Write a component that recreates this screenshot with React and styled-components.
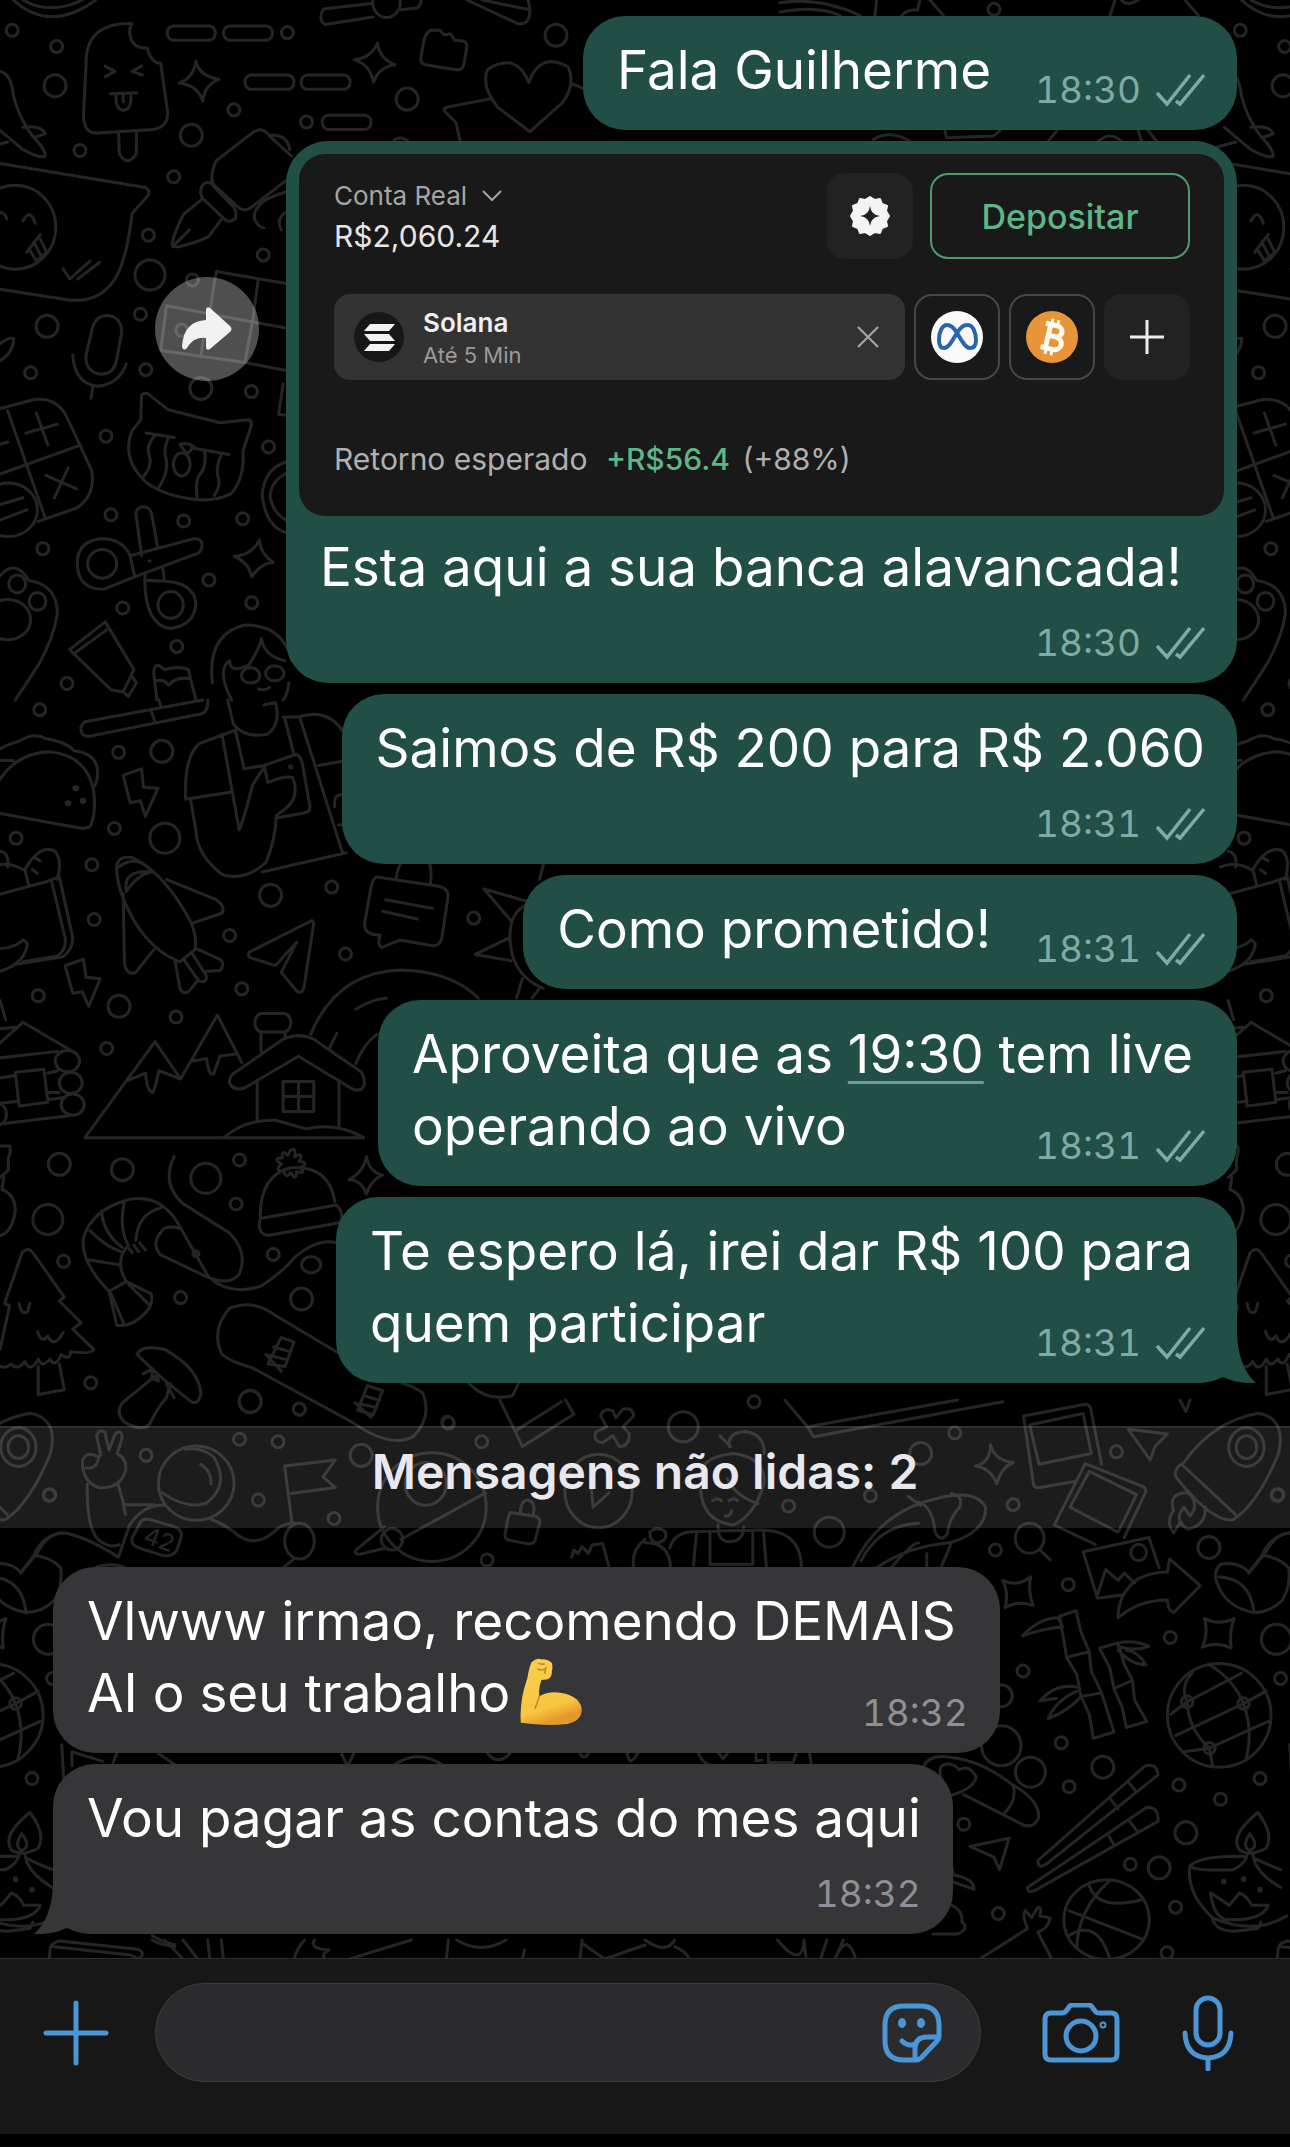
import styled, { createGlobalStyle, css } from 'styled-components';

const colors = {
  out: '#214f46',
  outMeta: '#80aaa5',
  incoming: '#363638',
  inMeta: '#8f8f96',
  accent: '#4a95d6',
  green: '#5fb586',
  card: '#191919',
};

// 배경 낙서 (wallpaper doodles), grouped in sheets that each have their own grid
const sheets = [
  {
    x: 0,
    y: 0,
    sx: 0.38265,
    sy: 0.44643,
    small: [[32, 68], [148, 104], [209, 337], [454, 396], [388, 527], [611, 246], [801, 273], [751, 73], [688, 571], [367, 704], [381, 828], [80, 835], [277, 977], [657, 877], [702, 1001], [634, 1162], [480, 1167], [290, 1153], [112, 1229], [546, 1299], [321, 1362], [658, 1350], [462, 1448], [175, 1531], [503, 627], [475, 740]],
    medium: [[144, 192], [500, 303], [1064, 222], [1453, 79], [525, 870], [123, 731]],
    large: [[392, 616]],
    ellipses: [[1010, 5, 36, 34], [40, 509, 106, 94], [22, 1142, 76, 60], [475, 1040, 22, 26], [267, 1263, 38, 32], [446, 1355, 33, 30], [45, 1308, 22, 20], [98, 1347, 22, 20], [20, 1388, 60, 45], [655, 1513, 24, 17], [718, 1508, 24, 17]],
    paths: [
      'M35 0Q130 75 250 0M60 0Q130 35 215 0',
      // ice cream
      'M345 53Q225 50 225 140L218 260Q220 300 255 298L400 290Q440 285 438 250L420 142Q395 142 385 108Q345 108 340 80Q336 65 345 53Z',
      'M310 297L312 345Q334 375 356 345L357 294M275 148L300 160L275 172M370 148L345 160L372 168M288 210L358 208M303 211Q302 247 323 247Q345 245 342 210M322 212V228',
      // dashes
      'M453 58H547A16 16 0 0 1 547 90H453A16 16 0 0 1 453 58ZM600 58H696A16 16 0 0 1 696 90H600A16 16 0 0 1 600 58ZM656 168H752A16 16 0 0 1 752 200H656A16 16 0 0 1 656 168ZM803 168H899A16 16 0 0 1 899 200H803A16 16 0 0 1 803 168ZM858 258H954A16 16 0 0 1 954 290H858A16 16 0 0 1 858 258Z',
      // sparkles
      'M512 137Q520 170 572 178Q535 190 530 226Q515 190 468 186Q505 175 512 137ZM987 96Q990 130 1032 145Q990 150 976 184Q968 145 926 134Q970 130 987 96ZM678 1210Q680 1240 714 1260Q680 1262 658 1292Q650 1260 612 1246Q655 1245 678 1210Z',
      // pen
      'M762 395L660 462Q640 478 620 462L560 415Q545 400 565 360L660 297Q685 282 705 305L762 350M525 425Q530 405 550 410L612 465Q620 475 615 490Q600 500 588 492L530 445Q522 435 525 425M530 445L480 480Q455 520 450 545Q450 555 465 553Q510 545 545 530L580 490M452 552L495 515M708 303Q750 300 757 335M748 430Q660 450 665 490Q675 510 690 510M748 475Q720 490 735 515',
      // folder
      'M1125 68L1150 68L1160 78L1178 76L1188 90L1210 92Q1222 95 1220 105L1212 145Q1208 158 1195 157L1112 145Q1097 142 1100 128L1108 90Q1112 75 1125 68Z',
      // heart
      'M1385 295L1300 240Q1255 190 1275 155Q1350 115 1382 185Q1410 115 1485 150Q1505 190 1470 230ZM1278 222L1168 240Q1155 245 1165 252L1192 275L1202 315M1495 188L1545 205M1030 315Q1045 302 1065 315',
      'M970 8L845 20Q830 45 850 55L975 38M1045 22L1090 18Q1102 10 1100 0M1220 0L1350 52Q1385 60 1385 20L1380 0M1260 0L1385 22',
      // face in speech bubble
      'M-100 385L0 366L380 420Q395 428 385 440L345 478Q335 560 310 610Q270 680 180 672L0 648M60 495Q78 465 92 500M-10 485Q5 465 18 490M70 565L105 525M105 535L122 565L95 585L78 560M92 548L108 575M165 602L182 625L235 585M203 625L260 588',
      'M0 160Q30 165 35 215Q50 265 85 305Q120 335 118 350Q100 355 60 335L-10 285M60 285Q110 280 118 300L90 308M-80 340Q-30 330 20 318',
      // microphone
      'M240 740Q248 705 285 707Q318 712 318 745L305 805Q298 840 260 838Q222 832 225 795ZM190 795Q195 860 255 865Q310 862 330 815M243 865L238 892M0 770Q20 755 36 758Q35 790 0 808',
      // calculator
      'M0 915L90 895Q150 890 175 935L240 1055Q250 1110 200 1138L100 1168M20 920L118 1160M0 1062L210 997M68 970L150 950M95 925L125 997M120 1065L200 1095M178 1048L142 1115M0 995L20 990M0 1130L60 1115M0 1165L70 1142',
      // crying cat
      'M370 885Q380 875 395 888L440 918L575 947L650 940Q662 945 655 958L635 1010Q640 1070 605 1105Q560 1125 500 1118Q400 1105 365 1065Q320 1020 345 965L368 940ZM382 970L455 980M500 1003L598 1018M405 975Q380 1000 390 1020Q400 1045 372 1070M440 980Q425 1010 435 1030Q440 1060 415 1092M535 1010Q540 1050 520 1065Q510 1080 515 1115M580 1015Q560 1050 572 1075Q575 1090 560 1110M470 995Q490 990 507 1000L488 1018Z',
      // bricks
      'M748 635L565 608L550 690M675 625L660 720L640 812M435 685L748 735M435 685L420 785L640 812L748 830M535 735L525 800M740 860L728 928L748 930M748 1035Q690 1050 685 1110Q695 1180 748 1193M748 1060Q705 1080 706 1115Q715 1150 748 1165',
      // scissors
      'M355 1150Q360 1130 385 1137Q395 1140 398 1160L412 1225M355 1150L370 1245M340 1245L505 1207Q530 1205 528 1225Q525 1240 505 1243L352 1292M340 1245L352 1292M340 1245Q320 1205 260 1207Q200 1215 202 1265Q205 1320 270 1320L352 1292M378 1300Q380 1400 445 1408Q510 1400 512 1350Q505 1305 430 1302ZM378 1300L380 1285M425 1270L430 1302M390 1256L392 1257',
      'M0 1290Q40 1250 75 1300Q150 1310 150 1375Q140 1430 100 1490Q70 1530 40 1568',
      // tube and candle
      'M275 1393L182 1455L290 1545L322 1550L350 1500ZM192 1465L285 1407M322 1550L335 1560L357 1530L345 1515M410 1568L402 1510Q400 1490 415 1490L430 1500Q470 1490 492 1500L512 1568M405 1525Q430 1520 440 1535Q460 1515 495 1520',
      // man with glasses
      'M555 1530Q540 1420 640 1400Q740 1400 762 1480M605 1568Q565 1500 600 1480Q600 1510 650 1490Q680 1450 683 1430Q690 1470 745 1480M755 1530Q750 1560 740 1568M675 1543Q690 1548 705 1540',
    ],
  },
  {
    x: 0,
    y: 700,
    sx: 0.38265,
    sy: 0.48465,
    small: [[104, 20], [310, 108], [299, 265], [42, 285], [240, 340], [246, 453], [100, 610], [460, 654], [279, 719], [600, 486], [632, 596], [867, 386], [903, 524], [1238, 450], [626, 949], [617, 1040], [714, 1144], [166, 1158], [472, 1233], [237, 1409], [782, 1463], [1170, 1490]],
    medium: [[423, 106], [707, 403], [311, 632], [155, 958], [320, 969], [788, 1236], [654, 1447]],
    large: [[431, 285], [538, 987], [125, 1072]],
    ellipses: [[176, 745, 32, 22], [185, 790, 30, 22], [190, 835, 30, 22], [-5, 855, 22, 22], [813, 1165, 25, 17], [198, 182, 5, 3], [217, 208, 5, 3], [178, 213, 5, 3], [760, 138, 3, 2], [512, 1143, 8, 6]],
    paths: [
      // taco
      'M-40 240Q0 110 130 107Q230 115 245 190Q252 235 235 262L215 265L-30 230M-20 110Q20 90 50 85Q90 65 120 80Q170 85 195 105Q255 110 255 150Q255 170 245 180M0 125L35 125',
      'M530 0L222 45Q205 55 215 70Q225 78 245 73L530 28Q545 20 543 0M405 45L395 22M415 0L420 12',
      // bolts
      'M322 155L370 142L375 180L413 182L380 240L367 208L340 212ZM170 548L218 535L225 572L262 575L232 632L215 602L190 605Z',
      // man with phone
      'M485 205Q480 120 520 90L615 62M485 205L605 190M580 70L625 268Q640 240 660 175Q680 150 690 140M595 0L610 50Q640 80 700 70Q735 50 720 5L690 10M615 62L638 142L690 135M745 40L768 112M740 35L780 35Q860 15 900 70M785 40L895 315M685 355L905 315M832 135L905 125M905 195Q870 190 875 220M905 258L885 258',
      'M690 135L775 112Q785 115 790 130L810 220Q810 232 795 233L725 243M690 135L700 170Q745 155 765 160Q785 200 745 225L722 238Q720 290 695 335Q640 375 580 360Q515 320 512 270L498 205',
      // bread bag
      'M-20 405L120 375L155 365L190 490Q190 515 165 530L45 545M135 375L170 490Q175 515 150 528L60 540M75 382L65 350Q100 300 140 310Q165 325 150 370M85 350L98 358M90 325L105 332M-20 345Q20 330 65 352M20 345Q25 315 0 312M-40 515Q40 515 60 495Q75 500 70 510Q60 545 0 560',
      // shuttle
      'M305 355Q300 320 345 325Q430 355 500 460Q515 490 510 515L470 540Q400 520 350 455Q310 400 305 355M330 395Q320 350 395 355Q360 360 330 395M310 345Q340 325 375 338M435 370L565 412Q590 425 580 440L505 460M322 400L325 540Q330 570 355 562L402 515M458 540L470 595Q480 610 495 600L515 580M510 512L575 535Q590 545 575 558L535 560M480 535L520 580Q540 585 540 570L500 520',
      // paper plane
      'M815 455L652 520Q645 528 655 532L720 548L775 500L735 562L775 600Q790 610 795 590L820 460Z',
      'M985 365L1150 385Q1175 390 1170 410L1155 490Q1150 508 1130 507L1045 495L1000 510Q985 510 993 485Q950 485 953 460L970 385Q975 368 985 365M1008 412L1130 430M1000 436L1090 452M1035 370Q1040 340 1055 330M1120 330Q1130 350 1125 380',
      // sun
      'M1400 415Q1320 430 1335 510Q1345 570 1420 595M1375 415L1265 390L1335 455M1328 492L1242 525L1335 538M1365 575L1350 615M1390 615L1410 595M1410 370L1420 340',
      // mountains and house
      'M222 903H950M222 903L405 705L472 782L568 650L632 748M335 785L380 770Q385 810 400 810Q410 790 415 765L472 782M505 745L540 740Q545 775 558 772L575 735L620 730',
      'M615 768L740 700Q780 685 820 700L945 768Q960 790 945 803Q930 808 915 800L780 735L640 800Q610 808 600 790Q598 775 615 768M672 785V868M886 785V878M740 787H820V849H740ZM780 787V849M740 818H820M685 647H741A18 18 0 0 1 741 685H685A18 18 0 0 1 685 647ZM682 687V725M745 687V697M585 903Q640 865 720 867L800 885Q880 870 950 903',
      'M812 690Q880 560 1050 557Q1180 560 1250 615M860 720L880 688M930 750Q950 710 985 690M930 638Q970 618 1010 615',
      // log cabin
      'M-60 750L60 665L200 730M-20 680L38 675M-40 742L150 725M125 770L150 765M125 810L155 810M0 875L180 858M0 832L50 828M125 825L170 820M0 780L40 775M40 768L115 762L125 830L50 838ZM0 620L15 660',
      'M0 920L25 920Q30 930 22 945L22 970L0 985M10 985L5 1010Q40 1020 40 1055Q30 1100 0 1105',
      // shrimp
      'M455 942Q420 1000 480 1040L600 1100Q650 1140 625 1185Q600 1210 540 1190L420 1145Q390 1120 430 1090Q450 1085 470 1090M465 1080Q420 1020 340 1030Q240 1050 218 1110Q210 1160 285 1220L330 1200Q300 1160 330 1130M265 1055Q270 1100 320 1130M325 1035Q310 1090 335 1125M420 1048Q360 1060 355 1115M235 1095Q280 1130 315 1138M230 1155L310 1165M285 1220L305 1290Q350 1295 390 1255Q400 1240 395 1225L330 1200M290 1225L325 1290M335 1205L390 1248M335 1130L345 1140M350 1125L362 1138M365 1120L380 1135M465 1080L545 1190Q600 1230 680 1210Q740 1180 770 1150Q830 1110 880 1120',
      // beanie
      'M680 1065Q680 980 760 965Q860 960 875 1035M680 1070L880 1042Q900 1060 890 1078L700 1105Q670 1100 680 1070M758 930Q775 920 770 943Q795 930 782 952Q810 955 785 965Q800 980 775 973Q775 995 760 975Q745 990 742 970Q715 975 735 957Q710 945 738 945Q735 925 752 940Z',
      'M958 942Q965 975 1000 980Q970 990 957 1020Q945 990 912 990Q950 975 958 942Z',
      // pine
      'M0 1340L25 1250L12 1245L58 1140Q75 1125 90 1145L168 1232L155 1240L212 1285L190 1298L245 1340Q240 1350 185 1345Q180 1365 160 1350Q145 1380 130 1360Q110 1380 100 1360Q80 1390 65 1365Q45 1385 30 1370Q15 1380 0 1375M100 1375L100 1433L168 1423L155 1370M50 1245Q55 1270 72 1262L78 1245M98 1303Q110 1330 125 1312Q140 1340 165 1305',
      // mushroom
      'M358 1350Q370 1330 430 1340Q520 1380 525 1430Q520 1455 500 1448Q420 1400 358 1350M405 1395L320 1450Q300 1470 325 1490Q370 1510 390 1495Q420 1450 435 1440L445 1410M375 1390L400 1380L395 1400L415 1405L410 1395M435 1410L455 1440',
      // snowboard
      'M890 1350L720 1270Q660 1235 600 1255Q550 1300 580 1350Q600 1365 660 1378L920 1490Q1020 1545 1080 1520Q1130 1480 1105 1430Q1080 1415 1050 1410M735 1315L768 1325L745 1375L700 1370ZM715 1335L760 1345M705 1352L752 1362M695 1350L735 1385M960 1415L1000 1425L975 1475L935 1465ZM950 1435L992 1445M940 1452L984 1460M928 1450L970 1480M1220 1405Q1270 1450 1340 1435L1355 1410',
    ],
  },
  {
    x: 0,
    y: 1400,
    sx: 0.41135,
    sy: 0.35714,
    small: [[121, 265], [355, 155], [582, 110], [676, 117], [628, 280], [812, 332], [728, 26], [1090, 65], [1171, 117], [1184, 448]],
    medium: [[878, 155], [608, 5]],
    large: [],
    ellipses: [[477, 233, 92, 104], [728, 395, 36, 50], [1050, 300, 132, 152], [1035, 235, 50, 60], [953, 390, 26, 30], [1455, 255, 82, 103]],
    paths: [
      // hand
      'M245 155L235 100Q240 80 255 90L265 140L280 95Q295 80 297 105L285 150Q310 165 305 200Q290 250 240 245Q200 230 200 170Q210 140 240 160Q235 195 210 190M212 235Q210 380 250 400Q270 415 290 405M288 240Q300 280 305 320M50 485L90 430Q120 360 170 375Q220 390 288 440L315 350Q350 290 400 295M305 293L375 293',
      'M395 260Q450 305 500 290Q560 240 520 160Q490 130 450 138M488 180Q515 200 513 235M515 335Q550 350 580 380Q620 410 660 375Q690 340 720 345',
      'M340 345Q345 330 365 335L425 355Q445 365 440 385L430 420Q420 440 395 435L340 415Q315 405 322 385Z',
      // flag
      'M692 185L815 168L785 215L815 245L708 262M692 185L710 345M715 445L690 468',
      'M975 390L1180 260M935 355L865 420Q860 432 875 432L935 415',
      // padlock and clock
      'M1240 315L1300 325Q1315 330 1312 345L1300 395Q1295 405 1280 402L1240 393Q1225 390 1228 375L1235 330ZM1265 318Q1265 280 1285 280Q1305 290 1295 325M1435 220L1442 300L1480 260',
      'M1460 45Q1465 20 1490 30L1497 50L1515 25Q1540 20 1540 45L1515 75L1530 95Q1530 130 1505 130L1490 100L1465 120Q1440 115 1448 90L1475 75Z',
      'M1215 0L1270 130L1395 40L1375 0M1255 85L1365 5M1390 440L1395 420L1405 430L1415 410L1430 430L1440 405L1465 402L1480 465M1540 465Q1535 420 1568 390',
      'M150 965L155 1060M175 1025V985L250 1012M275 1015L285 985M385 990L430 1025M830 990L845 1025L860 990M960 1020Q1020 975 1080 1025M1185 990Q1210 1025 1240 990M1410 990Q1420 1010 1430 990M1525 990Q1530 1030 1550 990M235 467Q270 455 300 467M370 1500Q400 1520 425 1525',
    ],
  },
  {
    x: 0,
    y: 1940,
    sx: 0.41135,
    sy: 0.33333,
    small: [],
    medium: [],
    large: [],
    ellipses: [],
    paths: [
      'M120 57L122 25Q125 8 145 3L335 28Q350 35 345 48L335 57M130 20L318 45L335 57M400 0L445 57M445 0L480 57M505 0L510 57M538 0L543 57M370 0Q390 15 425 20M740 0Q720 30 715 57M765 0Q750 25 800 30Q780 40 790 57M850 57L1000 0M1085 57L1090 0M1110 0Q1170 45 1230 0M1275 30L1270 57M1410 57L1415 0M1415 10L1470 57L1568 15M1568 0Q1620 45 1640 0M1640 20Q1670 35 1675 57M1890 0Q1950 90 1955 0M1955 10L1960 57M2010 0L1995 57M2050 0L2030 57Q2060 -30 2080 57',
    ],
  },
  {
    x: 645,
    y: 1400,
    sx: 0.41135,
    sy: 0.35714,
    small: [[753, 92], [1146, 145], [895, 293], [1537, 267], [852, 420], [1029, 517], [1277, 665], [919, 759], [1012, 960], [1031, 1083], [1298, 1078], [1399, 1118], [775, 1188], [1180, 1300], [859, 1438], [1290, 1420], [1269, 1548], [1545, 780], [1495, 1060], [349, 297], [548, 268], [265, 5]],
    medium: [[866, 828], [1113, 1028], [1371, 413], [1315, 1212], [1250, 1310], [670, 150]],
    large: [[93, 75], [448, 370], [937, 1042], [1535, 670]],
    ellipses: [[866, 968, 48, 56], [1462, 132, 43, 54], [1462, 132, 25, 32], [935, 387, 35, 42], [1200, 427, 19, 23], [1396, 883, 126, 145], [1318, 845, 14, 16], [1455, 850, 14, 16], [1372, 975, 14, 16], [1122, 1455, 104, 112], [1407, 1348, 3, 4], [1455, 1342, 3, 4], [1495, 1371, 3, 4]],
    paths: [
      'M340 0L395 75L760 0M395 75L410 103L870 5M1300 0L1315 32L1325 0',
      // woman
      'M205 130Q200 90 245 88Q290 95 290 150M182 100L208 130M135 220Q130 160 215 150Q290 160 290 230Q270 320 215 350Q140 340 135 250M200 220Q220 270 275 290M165 282Q175 272 185 282M205 282Q215 272 225 282M195 325Q210 325 210 310M178 350Q175 395 205 397Q240 395 240 355M60 415Q70 370 120 368L260 365Q380 355 380 468M125 372L118 462M158 372V460H262V370M288 370L295 465M12 370Q30 350 50 370Q55 395 30 400Q10 395 12 370M0 400Q60 400 62 468',
      'M505 468Q560 330 680 285Q800 240 828 300Q830 370 740 400Q640 410 565 468M525 450Q570 350 665 345M665 285Q700 300 705 370Q720 400 735 375Q740 330 765 300Q775 270 745 262M640 270L670 295M600 468Q650 400 665 400M745 400L720 468M685 430V468',
      // photos
      'M1110 180L1083 22Q1080 12 1070 12L920 45L945 240Q950 248 960 245L1045 228M935 70L1065 38L1085 150L958 180ZM1165 385L1217 258Q1220 245 1205 240L1070 178L995 350L1095 405M1080 200L1195 265L1150 370L1033 300Z',
      'M840 125Q850 170 895 175Q865 190 855 235Q840 190 803 185Q840 175 840 125ZM1175 82L1270 95L1240 130L1228 168Z',
      // rocket
      'M1310 175Q1380 60 1490 37Q1560 50 1540 150Q1490 290 1430 335Q1380 345 1290 215Q1285 190 1310 175M1305 180L1435 320M1320 260Q1270 260 1285 310Q1265 340 1285 372L1300 345L1320 362Q1365 350 1362 300M1320 260Q1350 290 1325 325L1310 300Q1290 330 1305 345',
      'M960 420L985 447M1250 470L1225 385L1065 425L1100 555L1165 545M1100 545L1120 475L1150 505L1165 485L1190 512M1275 445L1350 520L1285 595Q1270 590 1270 560Q1200 560 1150 610Q1150 540 1200 500Q1240 480 1270 482Z',
      // boot
      'M1568 372Q1520 380 1500 435L1468 482Q1440 450 1400 460Q1380 480 1390 510Q1410 580 1480 595Q1520 595 1550 560Q1570 520 1565 470Q1540 440 1500 435M1395 495Q1470 500 1480 590',
      'M870 505Q905 525 938 495Q930 530 943 575Q905 560 875 582Q885 545 870 505ZM1360 612Q1395 632 1432 612Q1420 650 1425 695Q1390 675 1355 692Q1370 650 1360 612Z',
      // bamboo
      'M1008 605L1048 590L1060 650L1080 705L1085 760L1110 820L1140 930L1090 947L1080 880L1060 830L1050 770L1025 720ZM1025 720L1080 705M1060 830L1110 820M918 660Q960 610 1005 610L1015 635Q970 640 918 660M1000 835L960 843Q1000 790 1055 805M1050 815Q1000 840 980 892Q1030 870 1060 830M1105 695L1150 680L1165 740L1185 785L1190 840L1220 900L1170 917L1160 860L1140 808L1130 750ZM1140 808L1185 785M1150 680Q1190 670 1225 690Q1190 705 1150 690M1150 700Q1180 740 1218 742Q1200 705 1170 700',
      // globe
      'M1330 765Q1300 800 1318 845Q1320 920 1372 975M1370 740Q1430 780 1455 850Q1480 930 1460 1010M1278 880L1318 845L1450 765M1290 940L1455 850L1510 815M1372 975L1515 900M1372 975L1380 1025M1372 975L1310 985',
      // chopsticks
      'M955 1290L1215 1025Q1245 1015 1247 1050L975 1300Q955 1315 955 1290M1130 1115L1150 1145M1175 1070L1195 1098M930 1365L1220 1140Q1250 1140 1247 1180L945 1375Q928 1380 930 1365M1125 1215L1140 1245M1175 1175L1195 1205',
      'M675 1030Q690 990 740 1000Q820 1010 890 1075Q960 1120 957 1170Q945 1200 920 1190L775 1105M735 1110Q710 1050 720 1025Q745 1010 763 1035Q790 1020 805 1055Q800 1090 735 1110M895 1080Q905 1120 875 1155M790 1250L885 1227L862 1315L848 1280ZM842 640Q865 690 842 740',
      // basketball
      'M1030 1430L1210 1510M1130 1345Q1050 1430 1050 1535M1080 1360Q1100 1430 1205 1400M1030 1500Q1100 1450 1130 1565',
      // lamp
      'M1490 1155Q1420 1220 1445 1260Q1470 1280 1510 1255Q1530 1215 1490 1155M1470 1215Q1450 1250 1470 1262Q1495 1250 1470 1215M1465 1270Q1460 1300 1430 1315M1478 1270Q1480 1320 1545 1365M1325 1305Q1350 1275 1460 1278M1430 1315Q1340 1320 1325 1305Q1315 1380 1380 1450Q1480 1500 1560 1445M1485 1285Q1510 1300 1545 1315M1375 1380Q1380 1440 1410 1455Q1500 1460 1515 1415L1475 1415Q1465 1390 1445 1380L1420 1415ZM1380 1455Q1390 1490 1440 1487L1490 1480L1497 1462',
      'M810 1568L930 1480Q915 1440 925 1430L940 1450L955 1420Q965 1420 960 1445L985 1450Q980 1480 955 1490L990 1568M740 1280L750 1330Q800 1340 800 1370L750 1350M735 1410Q775 1425 770 1460Q790 1480 760 1495L700 1495M130 990Q140 1020 165 1025M180 990L190 1005L200 990M270 990V1010L285 1008M300 990V1015H360L368 990M400 990L405 1025',
    ],
  },
  {
    x: 780,
    y: 0,
    sx: 0.33333,
    sy: 0.34438,
    small: [[642, 27]],
    medium: [],
    large: [],
    ellipses: [],
    paths: [
      'M0 35Q110 15 180 45M0 8Q120 -10 240 45M290 0L285 45M365 45Q385 25 412 30L420 0M450 0L490 45M1005 0L990 45M1025 0Q1040 20 1075 0M1215 0L1255 45M280 405Q330 375 390 410M495 380L500 400L640 395L660 380M805 410L830 380M955 410Q990 380 1025 410M1075 380L1085 410M1105 380L1130 410',
    ],
  },
];

const DoodleSheet = ({ sheet }) => {
  const dots = [
    ...sheet.small.map((d) => [...d, 6]),
    ...sheet.medium.map((d) => [...d, 11]),
    ...sheet.large.map((d) => [...d, 15]),
  ];
  return (
    <g transform={`translate(${sheet.x} ${sheet.y}) scale(${sheet.sx} ${sheet.sy})`}>
      {dots.map(([cx, cy, r]) => (
        <ellipse key={`${cx}-${cy}`} cx={cx} cy={cy} rx={r / sheet.sx} ry={r / sheet.sy} />
      ))}
      {sheet.ellipses.map(([cx, cy, rx, ry]) => (
        <ellipse key={`${cx}-${cy}-${rx}`} cx={cx} cy={cy} rx={rx} ry={ry} />
      ))}
      {sheet.paths.map((d) => (
        <path key={d} d={d} />
      ))}
    </g>
  );
};

const Wallpaper = () => (
  <WallpaperSvg aria-hidden="true">
    <g id="doodles">
      {sheets.map((sheet, index) => (
        <DoodleSheet key={index} sheet={sheet} />
      ))}
      <text x="142" y="1542" transform="rotate(20 142 1542)">42</text>
    </g>
    <use href="#doodles" x="1228" />
    <use href="#doodles" x="-1228" />
  </WallpaperSvg>
);

const Ticks = () => (
  <svg width="50" height="34" viewBox="0 0 50 34" fill="none" stroke="currentColor" strokeWidth="3.5">
    <path d="M2 20L12 31L35 2M21 28L25 31L49 2" />
  </svg>
);

const Tail = () => (
  <TailSvg viewBox="0 0 60 60" aria-hidden="true">
    <path d="M0 0H41V10Q42 44 60 60Q42 61 27 54Q15 60 0 60Z" />
  </TailSvg>
);

const Muscle = () => (
  <MuscleSvg viewBox="0 0 150 186" preserveAspectRatio="none" role="img" aria-label="💪">
    <defs>
      <linearGradient id="skin" x1="0" y1="0" x2="0.3" y2="1">
        <stop offset="0" stopColor="#f9cf52" />
        <stop offset="0.8" stopColor="#f8c63f" />
        <stop offset="1" stopColor="#e39a2a" />
      </linearGradient>
    </defs>
    <path
      fill="url(#skin)"
      d="M28 12Q40 -3 52 4Q66 2 77 14Q80 25 77 38Q78 56 64 60L52 61Q44 84 47 106Q70 91 100 97Q142 105 149 138Q152 174 115 183Q60 190 2 180Q-2 120 18 55Q22 25 28 12Z"
    />
    <path fill="none" stroke="#c8842a" strokeWidth="4" d="M44 14Q52 20 60 16M42 30Q54 38 62 28L60 44M47 106Q42 126 36 140" />
  </MuscleSvg>
);

const Message = ({ incoming, meta = 'beside', time, tail, children, card }) => (
  <Bubble $incoming={incoming}>
    {card}
    <Content $meta={meta}>
      <Text>{children}</Text>
      <Meta $incoming={incoming}>
        <time>{time}</time>
        {!incoming && <Ticks />}
      </Meta>
    </Content>
    {tail && <Tail />}
  </Bubble>
);

const TradeCard = () => (
  <Card>
    <CardRow>
      <Account>
        <AccountName>
          Conta Real
          <svg width="22" height="14" viewBox="0 0 22 14" fill="none" stroke="currentColor" strokeWidth="2">
            <path d="M2 2L11 11L20 2" />
          </svg>
        </AccountName>
        <Balance>R$2,060.24</Balance>
      </Account>
      <Tile $filled aria-label="Bônus">
        <svg width="40" height="40" viewBox="0 0 40 40">
          <path
            fill="#f4f4f4"
            stroke="#f4f4f4"
            strokeWidth="2"
            strokeLinejoin="round"
            d="M20 1L25 4L30 3L32 8L37 10L36 15L39 20L36 25L37 30L32 32L30 37L25 36L20 39L15 36L10 37L8 32L3 30L4 25L1 20L4 15L3 10L8 8L10 3L15 4Z"
          />
          <path fill="#202020" d="M20 10Q21 19 30 20Q21 21 20 30Q19 21 10 20Q19 19 20 10Z" />
        </svg>
      </Tile>
      <DepositButton>Depositar</DepositButton>
    </CardRow>
    <AssetRow>
      <Asset>
        <svg width="51" height="51" viewBox="0 0 51 51">
          <circle cx="25" cy="25" r="25" fill="#171717" />
          <path fill="#f2f2f2" d="M16 12H41L35 19H10ZM10 22H35L41 29H16ZM16 32H41L35 39H10Z" />
        </svg>
        <AssetText>
          <strong>Solana</strong>
          <span>Até 5 Min</span>
        </AssetText>
        <CloseButton aria-label="Fechar">
          <svg width="22" height="22" viewBox="0 0 22 22" fill="none" stroke="currentColor" strokeWidth="2">
            <path d="M1 1L21 21M21 1L1 21" />
          </svg>
        </CloseButton>
      </Asset>
      <Tile aria-label="Meta">
        <svg width="52" height="52" viewBox="0 0 52 52">
          <circle cx="26" cy="26" r="26" fill="#fafafa" />
          <path
            fill="none"
            stroke="#2a63b4"
            strokeWidth="4"
            d="M26 22C22 15 19 14 16 14C11 14 8 21 8 29C8 35 10 37 13 37C17 37 20 32 26 22C31 14 34 14 37 14C42 14 45 22 45 29C45 34 43 37 39 37C35 37 32 32 26 22Z"
          />
        </svg>
      </Tile>
      <Tile aria-label="Bitcoin">
        <svg width="52" height="52" viewBox="0 0 52 52">
          <circle cx="26" cy="26" r="26" fill="#e8943a" />
          <g fill="none" stroke="#fffaf0" strokeWidth="5" transform="rotate(13 26 26)">
            <path d="M17 14H28C37 14 37 25 28 25H22M28 25C40 25 39 38 29 38H17M22 14V38" />
            <path strokeWidth="3" d="M23 8V14M29 8V14M23 38V44M29 38V44" />
          </g>
        </svg>
      </Tile>
      <Tile $filled aria-label="Adicionar">
        <svg width="34" height="34" viewBox="0 0 34 34" stroke="#ededed" strokeWidth="3">
          <path d="M17 0V34M0 17H34" />
        </svg>
      </Tile>
    </AssetRow>
    <Return>
      Retorno esperado <b>+R$56.4</b> (+88%)
    </Return>
  </Card>
);

const App = () => {
  return (
    <>
      <GlobalStyle />
      <Page>
        <Wallpaper />
        <Chat>
          <Outgoing>
            <Message time="18:30">Fala Guilherme</Message>
            <ForwardRow>
              <ForwardButton aria-label="Encaminhar">
                <svg width="50" height="44" viewBox="0 0 50 44" fill="#f2f2f2">
                  <path d="M24 3Q24 -1 28 1L48 19Q51 22 48 25L28 42Q24 44 24 40V31Q12 29 5 41Q1 45 0 39Q2 14 24 13Z" />
                </svg>
              </ForwardButton>
              <Message meta="below" time="18:30" card={<TradeCard />}>
                Esta aqui a sua banca alavancada!
              </Message>
            </ForwardRow>
            <Message meta="below" time="18:31">
              Saimos de R$ 200 para R$ 2.060
            </Message>
            <Message time="18:31">Como prometido!</Message>
            <Message meta="over" time="18:31">
              Aproveita que as <TimeLink href="#live">19:30</TimeLink> tem live
              <br />
              operando ao vivo
            </Message>
            <Message meta="over" time="18:31" tail>
              Te espero lá, irei dar R$ 100 para
              <br />
              quem participar
            </Message>
          </Outgoing>
          <Unread>Mensagens não lidas: 2</Unread>
          <Incoming>
            <Message incoming meta="over" time="18:32">
              Vlwww irmao, recomendo DEMAIS
              <br />
              AI o seu trabalho
              <Muscle />
            </Message>
            <Message incoming meta="below" time="18:32" tail>
              Vou pagar as contas do mes aqui
            </Message>
          </Incoming>
        </Chat>
        <Composer>
          <IconButton aria-label="Anexar">
            <svg width="66" height="66" viewBox="0 0 66 66">
              <path d="M33 3V63M3 33H63" />
            </svg>
          </IconButton>
          <Field>
            <FieldInput type="text" aria-label="Mensagem" />
            <IconButton aria-label="Figurinhas">
              <svg width="60" height="60" viewBox="0 0 60 60">
                <path d="M22 3H38Q57 3 57 22V34Q57 36 55 38L39 55Q37 57 34 57H22Q3 57 3 38V22Q3 3 22 3ZM56 34H45Q33 34 33 46V56M20 38Q26 44 33 41" />
                <ellipse cx="20" cy="20" rx="1.5" ry="2.5" />
                <ellipse cx="39" cy="20" rx="1.5" ry="2.5" />
              </svg>
            </IconButton>
          </Field>
          <Actions>
            <IconButton aria-label="Câmera">
              <svg width="78" height="60" viewBox="0 0 78 60">
                <path d="M9 10H20Q23 10 25 7L27 4Q28 2 31 2H46Q49 2 50 4L53 8Q54 10 57 10H69Q75 10 75 16V51Q75 57 69 57H9Q3 57 3 51V16Q3 10 9 10Z" />
                <circle cx="39" cy="33" r="15" />
                <circle cx="61" cy="22" r="1" />
              </svg>
            </IconButton>
            <IconButton aria-label="Gravar áudio">
              <svg width="52" height="76" viewBox="0 0 52 76">
                <rect x="14" y="3" width="24" height="47" rx="12" />
                <path d="M3 38Q4 62 26 63Q48 62 49 38M26 63V74" />
              </svg>
            </IconButton>
          </Actions>
        </Composer>
      </Page>
    </>
  );
};

export default App;

const GlobalStyle = createGlobalStyle`
  * {
    box-sizing: border-box;
  }

  body {
    margin: 0;
    background-color: #070707;
    font-family: Inter, 'Liberation Sans', sans-serif;
  }

  button {
    padding: 0;
    border: 0;
    background: none;
    font-family: inherit;
    cursor: pointer;
  }
`;

const Page = styled.div`
  position: relative;
  display: flex;
  flex-direction: column;
  overflow: hidden;
  background-color: black;
`;

const WallpaperSvg = styled.svg`
  position: absolute;
  inset: 0;
  width: 100%;
  height: 100%;
  fill: none;
  stroke: #252525;
  stroke-width: 3;
  stroke-linecap: round;
  stroke-linejoin: round;

  path,
  ellipse {
    vector-effect: non-scaling-stroke;
  }

  text {
    fill: #252525;
    stroke: none;
    font-size: 24px;
    font-weight: 500;
  }
`;

const Chat = styled.main`
  position: relative;
  display: flex;
  flex-direction: column;
  padding: 16px 0 24px;
`;

const Outgoing = styled.section`
  display: flex;
  flex-direction: column;
  align-items: flex-end;
  gap: 11px;
  padding: 0 53px;
`;

const Incoming = styled(Outgoing)`
  align-items: flex-start;
`;

const ForwardRow = styled.div`
  display: flex;
  align-items: flex-start;
  gap: 27px;
`;

const ForwardButton = styled.button`
  display: flex;
  align-items: center;
  justify-content: center;
  width: 104px;
  height: 104px;
  margin-top: 136px;
  border-radius: 50%;
  background-color: rgba(255, 255, 255, 0.31);
`;

const TailSvg = styled.svg`
  position: absolute;
  bottom: 0;
  right: -19px;
  width: 60px;
  height: 60px;
  z-index: -1;
`;

const Bubble = styled.article`
  position: relative;
  z-index: 0;
  display: flex;
  flex-direction: column;
  padding: 18px 32px 18px 34px;
  border-radius: 42px;
  color: white;
  background-color: ${({ $incoming }) => ($incoming ? colors.incoming : colors.out)};

  ${TailSvg} {
    fill: ${({ $incoming }) => ($incoming ? colors.incoming : colors.out)};
    ${({ $incoming }) =>
      $incoming &&
      css`
        right: auto;
        left: -19px;
        transform: scaleX(-1);
      `}
  }
`;

const Text = styled.p`
  margin: 0;
  font-size: 53px;
  line-height: 72px;
  white-space: nowrap;
`;

const Meta = styled.div`
  display: flex;
  align-items: center;
  gap: 14px;
  font-size: 37px;
  font-variant-numeric: tabular-nums;
  line-height: 44px;
  color: ${({ $incoming }) => ($incoming ? colors.inMeta : colors.outMeta)};
`;

const contentLayout = {
  beside: css`
    display: flex;
    align-items: flex-end;
    gap: 44px;

    ${Text} {
      margin-bottom: 6px;
    }
  `,
  below: css`
    display: flex;
    flex-direction: column;
    gap: 18px;

    ${Meta} {
      align-self: flex-end;
    }
  `,
  over: css`
    display: grid;

    ${Text},
    ${Meta} {
      grid-area: 1 / 1;
    }

    ${Text} {
      margin: 0 12px 6px 0;
    }

    ${Meta} {
      align-self: end;
      justify-self: end;
    }
  `,
};

const Content = styled.div`
  ${({ $meta }) => contentLayout[$meta]}
`;

const TimeLink = styled.a`
  color: inherit;
  text-decoration: underline;
  text-decoration-color: #6d9c94;
  text-decoration-thickness: 3px;
  text-underline-offset: 8px;
`;

const MuscleSvg = styled.svg`
  width: 62px;
  height: 67px;
  margin-left: 10px;
  vertical-align: -13px;
`;

const Card = styled.div`
  display: flex;
  flex-direction: column;
  min-width: 925px;
  margin: -5px -19px 15px -21px;
  padding: 19px 34px 37px 35px;
  border-radius: 26px;
  background-color: ${colors.card};
`;

const CardRow = styled.div`
  display: flex;
  align-items: center;
  gap: 17px;
`;

const Account = styled.div`
  flex: 1;
`;

const AccountName = styled.div`
  display: flex;
  align-items: center;
  gap: 14px;
  font-size: 26px;
  line-height: 40px;
  color: #a6a6a6;
`;

const Balance = styled.div`
  font-size: 30px;
  line-height: 40px;
  color: #e6e6e6;
`;

const Tile = styled.button`
  display: flex;
  align-items: center;
  justify-content: center;
  width: 86px;
  height: 86px;
  border: 2px solid ${({ $filled }) => ($filled ? 'transparent' : '#474747')};
  border-radius: 18px;
  background-color: ${({ $filled }) => ($filled ? '#222' : 'transparent')};
`;

const DepositButton = styled.button`
  width: 260px;
  height: 86px;
  border: 2px solid #4d9a70;
  border-radius: 18px;
  font-size: 34px;
  font-weight: 500;
  color: ${colors.green};
`;

const AssetRow = styled.div`
  display: flex;
  gap: 9px;
  margin-top: 35px;
`;

const Asset = styled.div`
  flex: 1;
  display: flex;
  align-items: center;
  gap: 18px;
  padding: 0 26px 0 20px;
  border-radius: 16px;
  background-color: #333;
`;

const AssetText = styled.div`
  flex: 1;
  display: flex;
  flex-direction: column;
  padding-top: 4px;
  line-height: 33px;

  strong {
    font-size: 26px;
    font-weight: 600;
    color: #f0f0f0;
  }

  span {
    font-size: 22px;
    color: #9a9a9a;
  }
`;

const CloseButton = styled.button`
  display: flex;
  color: #a8a8a8;
`;

const Return = styled.div`
  margin-top: 59px;
  font-size: 30px;
  line-height: 40px;
  color: #b0b0b0;

  b {
    margin: 0 4px 0 10px;
    font-weight: 500;
    color: ${colors.green};
  }
`;

const Unread = styled.h2`
  margin: 43px 0 39px;
  padding-bottom: 12px;
  border-top: 2px solid rgba(255, 255, 255, 0.09);
  font-size: 48px;
  font-weight: 600;
  line-height: 88px;
  text-align: center;
  color: #e9e7f0;
  background-color: rgba(255, 255, 255, 0.11);
`;

const Composer = styled.footer`
  position: relative;
  display: flex;
  align-items: center;
  gap: 46px;
  margin-bottom: 12px;
  padding: 24px 56px 52px 43px;
  border-top: 1px solid #2e2e2e;
  background-color: #171717;
`;

const IconButton = styled.button`
  display: flex;

  svg {
    fill: none;
    stroke: ${colors.accent};
    stroke-width: 5;
    stroke-linecap: round;
    stroke-linejoin: round;
  }
`;

const Field = styled.div`
  flex: 1;
  display: flex;
  align-items: center;
  min-width: 0;
  height: 99px;
  padding: 0 38px;
  border: 1px solid #3d3d3f;
  border-radius: 50px;
  background-color: #2b2b2d;
`;

const FieldInput = styled.input`
  flex: 1;
  min-width: 0;
  border: 0;
  outline: 0;
  font: inherit;
  font-size: 46px;
  color: white;
  background: none;
`;

const Actions = styled.div`
  display: flex;
  align-items: center;
  gap: 62px;
  margin-left: 15px;
`;
